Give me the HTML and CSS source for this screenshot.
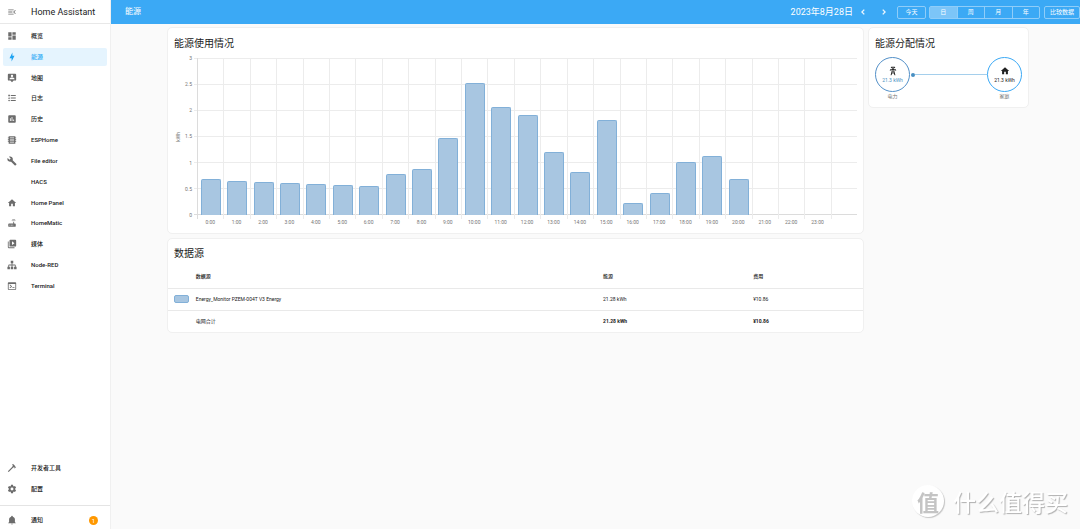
FILE: index.html
```html
<!DOCTYPE html>
<html lang="zh-CN">
<head>
<meta charset="utf-8">
<meta name="viewport" content="width=device-width, initial-scale=1">
<title>能源 – Home Assistant</title>
<link rel="stylesheet" href="styles.css">
</head>
<body>
<div class="app">
  <aside class="sidebar">
    <div class="brand">
      <button class="icon-button" type="button" aria-label="折叠侧栏"><svg class="icon" viewBox="0 0 24 24"><path d="M21,15.61L19.59,17L14.58,12L19.59,7L21,8.39L17.44,12L21,15.61M3,6H16V8H3V6M3,13V11H13V13H3M3,18V16H16V18H3Z"/></svg></button>
      <span class="brand-name">Home Assistant</span>
    </div>
    <nav class="nav nav-main">
      <a class="nav-item" href="#"><svg class="icon" viewBox="0 0 24 24"><path d="M13,3V9H21V3M13,21H21V11H13M3,21H11V15H3M3,13H11V3H3V13Z"/></svg><span>概览</span></a>
      <a class="nav-item active" href="#" aria-current="page"><svg class="icon" viewBox="0 0 24 24"><path d="M11 15H6L13 1V9H18L11 23V15Z"/></svg><span>能源</span></a>
      <a class="nav-item" href="#"><svg class="icon" viewBox="0 0 24 24"><path d="M20,2H4A2,2 0 0,0 2,4V16A2,2 0 0,0 4,18H8L12,22L16,18H20A2,2 0 0,0 22,16V4A2,2 0 0,0 20,2M12,4.3C13.5,4.3 14.7,5.5 14.7,7C14.7,8.5 13.5,9.7 12,9.7C10.5,9.7 9.3,8.5 9.3,7C9.3,5.5 10.5,4.3 12,4.3M18,15H6V14.1C6,12.1 10,11 12,11C14,11 18,12.1 18,14.1V15Z"/></svg><span>地图</span></a>
      <a class="nav-item" href="#"><svg class="icon" viewBox="0 0 24 24"><path d="M5,9.5L7.5,14H2.5L5,9.5M3,4H7V8H3V4M5,20A2,2 0 0,0 7,18A2,2 0 0,0 5,16A2,2 0 0,0 3,18A2,2 0 0,0 5,20M9,5V7H21V5H9M9,19H21V17H9V19M9,13H21V11H9V13Z"/></svg><span>日志</span></a>
      <a class="nav-item" href="#"><svg class="icon" viewBox="0 0 24 24"><path d="M17 17H15V13H17M13 17H11V7H13M9 17H7V10H9M19 3H5C3.89 3 3 3.89 3 5V19C3 20.11 3.9 21 5 21H19C20.11 21 21 20.11 21 19V5C21 3.89 20.1 3 19 3Z"/></svg><span>历史</span></a>
      <a class="nav-item" href="#"><svg class="icon" viewBox="0 0 24 24"><path d="M4 3H20V6H22V8H20V10H22V12H20V14H22V16H20V21H4V16H2V14H4V12H2V10H4V8H2V6H4V3M7 6V8H17V6H7M7 11V13H17V11H7M7 16V18H17V16H7Z"/></svg><span>ESPHome</span></a>
      <a class="nav-item" href="#"><svg class="icon" viewBox="0 0 24 24"><path d="M22.7,19L13.6,9.9C14.5,7.6 14,4.9 12.1,3C10.1,1 7.1,0.6 4.7,1.7L9,6L6,9L1.6,4.7C0.4,7.1 0.9,10.1 2.9,12.1C4.8,14 7.5,14.5 9.8,13.6L18.9,22.7C19.3,23.1 19.9,23.1 20.3,22.7L22.6,20.4C23.1,20 23.1,19.3 22.7,19Z"/></svg><span>File editor</span></a>
      <a class="nav-item" href="#"><span class="icon"></span><span>HACS</span></a>
      <a class="nav-item" href="#"><svg class="icon" viewBox="0 0 24 24"><path d="M10,20V14H14V20H19V12H22L12,3L2,12H5V20H10Z"/></svg><span>Home Panel</span></a>
      <a class="nav-item" href="#"><svg class="icon" viewBox="0 0 24 24"><path d="M20.2,5.9L21,5.1C19.6,3.7 17.8,3 16,3C14.2,3 12.4,3.7 11,5.1L11.8,5.9C13,4.8 14.5,4.2 16,4.2C17.5,4.2 19,4.8 20.2,5.9M19.3,6.7C18.4,5.8 17.2,5.3 16,5.3C14.8,5.3 13.6,5.8 12.7,6.7L13.5,7.5C14.2,6.8 15.1,6.5 16,6.5C16.9,6.5 17.8,6.8 18.5,7.5L19.3,6.7M19,13H17V9H15V13H5A2,2 0 0,0 3,15V19A2,2 0 0,0 5,21H19A2,2 0 0,0 21,19V15A2,2 0 0,0 19,13M8,18H6V16H8V18M11.5,18H9.5V16H11.5V18M15,18H13V16H15V18Z"/></svg><span>HomeMatic</span></a>
      <a class="nav-item" href="#"><svg class="icon" viewBox="0 0 24 24"><path d="M4,6H2V20A2,2 0 0,0 4,22H18V20H4V6M20,2H8A2,2 0 0,0 6,4V16A2,2 0 0,0 8,18H20A2,2 0 0,0 22,16V4A2,2 0 0,0 20,2M12,14.5V5.5L18,10L12,14.5Z"/></svg><span>媒体</span></a>
      <a class="nav-item" href="#"><svg class="icon" viewBox="0 0 24 24"><path d="M9,2V8H11V11H5C3.89,11 3,11.89 3,13V16H1V22H7V16H5V13H11V16H9V22H15V16H13V13H19V16H17V22H23V16H21V13C21,11.89 20.11,11 19,11H13V8H15V2H9Z"/></svg><span>Node-RED</span></a>
      <a class="nav-item" href="#"><svg class="icon" viewBox="0 0 24 24"><path d="M20,19V7H4V19H20M20,3A2,2 0 0,1 22,5V19A2,2 0 0,1 20,21H4A2,2 0 0,1 2,19V5C2,3.89 2.9,3 4,3H20M13,17V15H18V17H13M9.58,13L5.57,9H8.4L11.7,12.3C12.09,12.69 12.09,13.33 11.7,13.72L8.42,17H5.59L9.58,13Z"/></svg><span>Terminal</span></a>
    </nav>
    <nav class="nav nav-tools">
      <a class="nav-item" href="#"><svg class="icon" viewBox="0 0 24 24"><path d="M2,19.63L13.43,8.2L12.72,7.5L14.14,6.07L12,3.89C13.2,2.7 15.09,2.7 16.27,3.89L19.87,7.5L18.45,8.91H21.29L22,9.62L18.45,13.21L17.74,12.5V9.62L16.27,11.04L15.56,10.33L4.13,21.76L2,19.63Z"/></svg><span>开发者工具</span></a>
      <a class="nav-item" href="#"><svg class="icon" viewBox="0 0 24 24"><path d="M12,15.5A3.5,3.5 0 0,1 8.5,12A3.5,3.5 0 0,1 12,8.5A3.5,3.5 0 0,1 15.5,12A3.5,3.5 0 0,1 12,15.5M19.43,12.97C19.47,12.65 19.5,12.33 19.5,12C19.5,11.67 19.47,11.34 19.43,11L21.54,9.37C21.73,9.22 21.78,8.95 21.66,8.73L19.66,5.27C19.54,5.05 19.27,4.96 19.05,5.05L16.56,6.05C16.04,5.66 15.5,5.32 14.87,5.07L14.5,2.42C14.46,2.18 14.25,2 14,2H10C9.75,2 9.54,2.18 9.5,2.42L9.13,5.07C8.5,5.32 7.96,5.66 7.44,6.05L4.95,5.05C4.73,4.96 4.46,5.05 4.34,5.27L2.34,8.73C2.21,8.95 2.27,9.22 2.46,9.37L4.57,11C4.53,11.34 4.5,11.67 4.5,12C4.5,12.33 4.53,12.65 4.57,12.97L2.46,14.63C2.27,14.78 2.21,15.05 2.34,15.27L4.34,18.73C4.46,18.95 4.73,19.03 4.95,18.95L7.44,17.94C7.96,18.34 8.5,18.68 9.13,18.93L9.5,21.58C9.54,21.82 9.75,22 10,22H14C14.25,22 14.46,21.82 14.5,21.58L14.87,18.93C15.5,18.67 16.04,18.34 16.56,17.94L19.05,18.95C19.27,19.03 19.54,18.95 19.66,18.73L21.66,15.27C21.78,15.05 21.73,14.78 21.54,14.63L19.43,12.97Z"/></svg><span>配置</span></a>
    </nav>
    <div class="notifications">
      <a class="nav-item" href="#"><svg class="icon" viewBox="0 0 24 24"><path d="M21,19V20H3V19L5,17V11C5,7.9 7.03,5.17 10,4.29C10,4.19 10,4.1 10,4A2,2 0 0,1 12,2A2,2 0 0,1 14,4C14,4.1 14,4.19 14,4.29C16.97,5.17 19,7.9 19,11V17L21,19M14,21A2,2 0 0,1 12,23A2,2 0 0,1 10,21"/></svg><span>通知</span><span class="badge">1</span></a>
    </div>
  </aside>

  <div class="page">
    <header class="toolbar">
      <h1 class="page-title">能源</h1>
      <span class="date">2023年8月28日</span>
      <div class="arrows">
        <button class="icon-button" type="button" aria-label="前一天"><svg class="icon" viewBox="0 0 24 24"><path d="M15.41,16.58L10.83,12L15.41,7.41L14,6L8,12L14,18L15.41,16.58Z"/></svg></button>
        <button class="icon-button" type="button" aria-label="后一天"><svg class="icon" viewBox="0 0 24 24"><path d="M8.59,16.58L13.17,12L8.59,7.41L10,6L16,12L10,18L8.59,16.58Z"/></svg></button>
      </div>
      <button class="outlined today" type="button">今天</button>
      <div class="segmented" role="group" aria-label="周期">
        <button class="segment selected" type="button" aria-pressed="true">日</button>
        <button class="segment" type="button">周</button>
        <button class="segment" type="button">月</button>
        <button class="segment" type="button">年</button>
      </div>
      <button class="outlined compare" type="button">比较数据</button>
    </header>

    <main class="content">
      <div class="column">
        <section class="card usage">
          <h2 class="card-title">能源使用情况</h2>
          <div class="chart">
            <div class="unit"><span>kWh</span></div>
            <div class="scale"><span>3</span><span>2.5</span><span>2</span><span>1.5</span><span>1</span><span>0.5</span><span>0</span></div>
            <div class="plot">
              <div class="rows"><i></i><i></i><i></i><i></i><i></i><i></i></div>
              <div class="bars">
                <div class="slot"><div class="bar" style="height:23%"></div></div>
                <div class="slot"><div class="bar" style="height:21.7%"></div></div>
                <div class="slot"><div class="bar" style="height:20.8%"></div></div>
                <div class="slot"><div class="bar" style="height:20.5%"></div></div>
                <div class="slot"><div class="bar" style="height:19.7%"></div></div>
                <div class="slot"><div class="bar" style="height:18.8%"></div></div>
                <div class="slot"><div class="bar" style="height:18.3%"></div></div>
                <div class="slot"><div class="bar" style="height:26%"></div></div>
                <div class="slot"><div class="bar" style="height:29%"></div></div>
                <div class="slot"><div class="bar" style="height:48.8%"></div></div>
                <div class="slot"><div class="bar" style="height:84.3%"></div></div>
                <div class="slot"><div class="bar" style="height:69%"></div></div>
                <div class="slot"><div class="bar" style="height:64%"></div></div>
                <div class="slot"><div class="bar" style="height:40%"></div></div>
                <div class="slot"><div class="bar" style="height:27.7%"></div></div>
                <div class="slot"><div class="bar" style="height:60.3%"></div></div>
                <div class="slot"><div class="bar" style="height:7.7%"></div></div>
                <div class="slot"><div class="bar" style="height:14%"></div></div>
                <div class="slot"><div class="bar" style="height:33.7%"></div></div>
                <div class="slot"><div class="bar" style="height:37.3%"></div></div>
                <div class="slot"><div class="bar" style="height:23%"></div></div>
                <div class="slot"></div>
                <div class="slot"></div>
                <div class="slot"></div>
                <div class="slot"></div>
              </div>
            </div>
            <div class="hours"><span>0:00</span><span>1:00</span><span>2:00</span><span>3:00</span><span>4:00</span><span>5:00</span><span>6:00</span><span>7:00</span><span>8:00</span><span>9:00</span><span>10:00</span><span>11:00</span><span>12:00</span><span>13:00</span><span>14:00</span><span>15:00</span><span>16:00</span><span>17:00</span><span>18:00</span><span>19:00</span><span>20:00</span><span>21:00</span><span>22:00</span><span>23:00</span><span></span></div>
          </div>
        </section>

        <section class="card sources">
          <h2 class="card-title">数据源</h2>
          <table class="table">
            <thead><tr><th class="c-swatch"></th><th class="c-name" scope="col">数据源</th><th class="c-energy" scope="col">能源</th><th scope="col">费用</th></tr></thead>
            <tbody>
              <tr><td><div class="swatch"></div></td><td>Energy_Monitor PZEM-004T V3 Energy</td><td>21.28 kWh</td><td>¥10.86</td></tr>
              <tr class="total"><td></td><th scope="row">电网合计</th><td>21.28 kWh</td><td>¥10.86</td></tr>
            </tbody>
          </table>
        </section>
      </div>

      <section class="card distribution">
        <h2 class="card-title">能源分配情况</h2>
        <div class="flow">
          <div class="node">
            <div class="circle grid-node"><svg class="icon" viewBox="0 0 24 24"><path d="M8.28,5.45L6.5,4.55L7.76,2H16.23L17.5,4.55L15.72,5.44L15,4H9L8.28,5.45M18.62,8H14.09L13.3,5H10.7L9.91,8H5.38L4.1,10.55L5.89,11.44L6.62,10H17.38L18.1,11.45L19.89,10.56L18.62,8M17.77,22H15.7L15.46,21.1L12,15.9L8.53,21.1L8.3,22H6.23L9.12,11H11.19L10.83,12.35L12,14.1L13.16,12.35L12.81,11H14.88L17.77,22M11.4,15L10.5,13.65L9.32,18.13L11.4,15M14.68,18.12L13.5,13.64L12.6,15L14.68,18.12Z"/></svg><span>21.3 kWh</span></div>
            <span class="node-label">电力</span>
          </div>
          <div class="link"></div>
          <div class="node">
            <div class="circle home-node"><svg class="icon" viewBox="0 0 24 24"><path d="M10,20V14H14V20H19V12H22L12,3L2,12H5V20H10Z"/></svg><span>21.3 kWh</span></div>
            <span class="node-label">家庭</span>
          </div>
        </div>
      </section>
    </main>
  </div>
</div>
<div class="watermark"><span class="seal">值</span><span>什么值得买</span></div>
</body>
</html>
```
FILE: styles.css
```css
* { box-sizing: border-box; }
body {
  margin: 0;
  background: #fafafa;
  color: #212121;
  font: 6px/8px Roboto, "Noto Sans CJK SC", sans-serif;
}
h1, h2 { margin: 0; font-weight: 400; }
a { color: inherit; text-decoration: none; }
button {
  margin: 0;
  padding: 0;
  border: 0;
  background: none;
  color: inherit;
  font: inherit;
}
.icon { display: block; flex: none; width: 10px; height: 10px; fill: currentColor; }

.app { display: flex; min-height: 100vh; }
.sidebar {
  display: flex;
  flex-direction: column;
  flex: none;
  width: 111px;
  border-right: 1px solid #f0f0f0;
  background: #fff;
}
.brand {
  display: flex;
  align-items: center;
  gap: 14px;
  height: 24px;
  padding-left: 7px;
  border-bottom: 1px solid #e8e8e8;
}
.brand .icon-button { color: #727272; }
.brand-name { font-size: 9px; line-height: 12px; }
.nav { display: flex; flex-direction: column; justify-content: space-between; padding: 0 3px; }
.nav-main { height: 268px; margin-top: 3px; }
.nav-tools { gap: 3px; margin-top: auto; padding-bottom: 7px; }
.nav-item {
  display: flex;
  align-items: center;
  gap: 14px;
  height: 18px;
  padding: 0 4px;
  border-radius: 2px;
  font-weight: 500;
}
.nav-item .icon { color: #6c6c6c; }
.nav-item.active { background: #e5f4fe; color: #2fabf5; }
.nav-item.active .icon { color: #1da3f2; }
.notifications { padding: 5px 3px 0; border-top: 1px solid #e4e4e4; }
.badge {
  width: 9px;
  height: 9px;
  margin: 0 5px 0 auto;
  border-radius: 50%;
  background: #ff9800;
  color: #fff;
  font-weight: 400;
  line-height: 9px;
  text-align: center;
}

.page { flex: 1; min-width: 0; }
.toolbar {
  display: flex;
  align-items: center;
  height: 24px;
  padding-left: 14px;
  background: #3ba9f5;
  color: #fff;
}
.page-title { flex: 1; font-size: 8px; line-height: 12px; }
.date { font-size: 9px; line-height: 12px; }
.arrows { display: flex; gap: 11px; margin: 0 8px 0 5px; }
.arrows .icon { stroke: currentColor; stroke-width: 1; }
.outlined, .segmented { height: 13px; border: 1px solid #8fcdf9; border-radius: 2px; }
.today { width: 29px; margin-right: 3px; }
.segmented { display: flex; width: 111px; margin-right: 4px; }
.segment { flex: 1; }
.segment + .segment { border-left: 1px solid #8fcdf9; }
.segment.selected { background: #7cc5f8; }
.compare { width: 36px; }

.content {
  display: grid;
  grid-template-columns: 1fr 161px;
  align-items: start;
  gap: 4px;
  padding: 3px 51px 0 56px;
}
.column { display: grid; gap: 4px; min-width: 0; }
.card { border: 1px solid #f0f0f0; border-radius: 5px; background: #fff; }
.card-title { padding: 8px 6px 0; font-size: 10px; line-height: 16px; }

.chart {
  display: grid;
  grid-template-columns: 8px 11px 1fr;
  grid-template-rows: 157px auto;
  column-gap: 2px;
  padding: 6px 6px 7px;
  color: #757575;
  font-size: 5px;
}
.unit { display: flex; align-items: center; }
.unit span { writing-mode: vertical-rl; transform: rotate(180deg); }
.scale { display: flex; flex-direction: column; justify-content: space-between; margin: -4px 3px -4px 0; text-align: right; }
.plot { display: grid; }
.rows, .bars { grid-area: 1 / 1; display: flex; }
.rows { flex-direction: column; margin-left: -3px; border-bottom: 1px solid #dcdcdc; }
.rows i { flex: 1; border-top: 1px solid #ececec; }
.bars { z-index: 1; }
.slot { display: flex; flex: 1; align-items: flex-end; justify-content: center; margin-bottom: -4px; padding-bottom: 4px; border-left: 1px solid #ececec; }
.slot:first-child { border-color: #dcdcdc; }
.bar {
  width: 20px;
  border: 1px solid #82b0d8;
  border-bottom: 0;
  border-radius: 2px 2px 0 0;
  background: #a8c6e1;
}
.hours { display: flex; grid-column: 3; padding-top: 3px; }
.hours span { flex: 1; text-align: center; }

.sources .card-title { padding-top: 7px; }
.table { width: 100%; margin-top: 2px; border-collapse: collapse; table-layout: fixed; font-size: 5px; text-align: left; }
.table th, .table td { height: 22px; padding: 0; font-weight: 400; }
.table thead th { height: 24px; font-weight: 500; }
.table tbody tr { border-top: 1px solid #e9e9e9; }
.table .total td { font-weight: 700; }
.c-swatch { width: 4%; }
.c-name { width: 58.6%; }
.c-energy { width: 21.6%; }
.swatch { width: 15px; height: 8px; margin-left: 6px; border: 1px solid #82b0d8; border-radius: 2px; background: #a8c6e1; }

.flow { display: flex; justify-content: space-between; padding: 5px 6px 7px; }
.node { display: flex; flex-direction: column; align-items: center; }
.circle {
  display: flex;
  flex-direction: column;
  align-items: center;
  justify-content: center;
  width: 35px;
  height: 35px;
  border: 1px solid;
  border-radius: 50%;
  font-size: 5px;
}
.circle .icon { color: #212121; }
.grid-node { border-color: #5390c8; color: #488fc2; }
.home-node { border-color: #3ba9f5; }
.home-node span { color: #212121; }
.node-label { color: #757575; font-size: 5px; }
.link { display: flex; flex: 1; align-items: center; height: 35px; }
.link::before { width: 4px; height: 4px; margin-left: 1px; border-radius: 50%; background: #488fc2; content: ""; }
.link::after { flex: 1; height: 1px; background: #a5cfec; content: ""; }

.watermark {
  position: fixed;
  right: 12px;
  bottom: 11px;
  display: flex;
  align-items: center;
  gap: 9px;
  color: #fff;
  font: 500 23px/34px "Noto Sans CJK SC", sans-serif;
  text-shadow: 1px 1px 1px #b0b0b0;
}
.seal {
  width: 32px;
  height: 32px;
  border-radius: 50%;
  background: #fff;
  box-shadow: 1px 1px 1px #c4c4c4;
  color: #c4c4c4;
  font-size: 22px;
  font-weight: 700;
  line-height: 32px;
  text-align: center;
  text-shadow: none;
}
```
